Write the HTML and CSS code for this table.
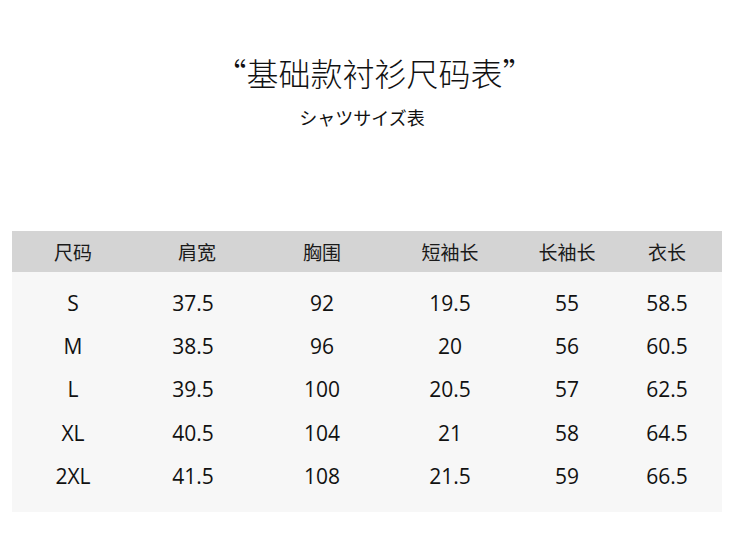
FILE: index.html
```html
<!DOCTYPE html>
<html lang="zh">
<head>
<meta charset="utf-8">
<link rel="stylesheet" href="styles.css">
</head>
<body>
<div class="page">
  <h1 class="title">“基础款衬衫尺码表”</h1>
  <p class="subtitle">シャツサイズ表</p>
  <div class="table">
    <div class="row head">
      <span>尺码</span><span>肩宽</span><span>胸围</span><span>短袖长</span><span>长袖长</span><span>衣长</span>
    </div>
    <div class="body">
      <div class="row"><span>S</span><span>37.5</span><span>92</span><span>19.5</span><span>55</span><span>58.5</span></div>
      <div class="row"><span>M</span><span>38.5</span><span>96</span><span>20</span><span>56</span><span>60.5</span></div>
      <div class="row"><span>L</span><span>39.5</span><span>100</span><span>20.5</span><span>57</span><span>62.5</span></div>
      <div class="row"><span>XL</span><span>40.5</span><span>104</span><span>21</span><span>58</span><span>64.5</span></div>
      <div class="row"><span>2XL</span><span>41.5</span><span>108</span><span>21.5</span><span>59</span><span>66.5</span></div>
    </div>
  </div>
</div>
</body>
</html>
```
FILE: styles.css
```css
html, body {
  margin: 0;
  padding: 0;
  background: #ffffff;
}
.page {
  width: 745px;
  height: 556px;
  padding-top: 51px;
  box-sizing: border-box;
  font-family: "Noto Sans CJK SC", "Noto Sans", sans-serif;
  color: #111;
}
.title {
  margin: 0 0 0 4px;
  text-align: center;
  font-size: 32px;
  font-weight: 300;
  line-height: 42px;
  letter-spacing: 0;
}
.subtitle {
  margin: 12px 0 0 -21px;
  text-align: center;
  font-size: 18px;
  line-height: 24px;
}
.table {
  margin: 102px 0 0 12px;
  width: 710px;
}
.row {
  display: grid;
  grid-template-columns: 122px 126px 124px 132px 102px 98px;
  padding-right: 6px;
  align-items: center;
  justify-items: center;
}
.head {
  background: #d4d4d4;
  height: 41px;
  font-size: 19px;
  color: #1a1a1a;
}
.body {
  background: #f7f7f7;
  padding: 9px 0 14px;
  font-family: "Open Sans", sans-serif;
  font-stretch: 88%;
}
.body .row {
  height: 43.4px;
  font-size: 21px;
}
.body .row span:nth-child(2) {
  margin-right: 8px;
}
```
